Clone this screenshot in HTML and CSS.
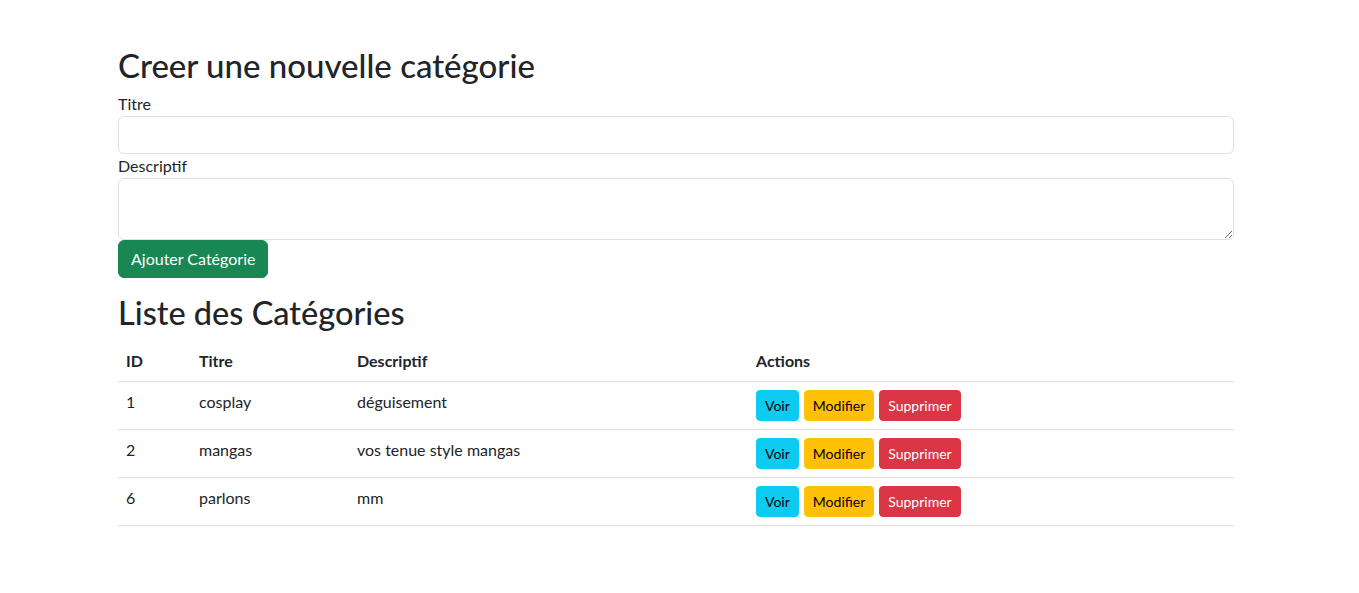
FILE: index.html
```html
<!DOCTYPE html>
<html lang="fr">
<head>
<meta charset="utf-8">
<title>Catégories</title>
<link rel="stylesheet" href="styles.css">
</head>
<body>
<div class="container">
  <h1 class="title">Creer une nouvelle catégorie</h1>
  <form class="form">
    <label class="label" for="titre">Titre</label>
    <input class="control" id="titre" type="text">
    <label class="label" for="desc">Descriptif</label>
    <textarea class="control area" id="desc" rows="2"></textarea>
    <button type="button" class="btn btn-success">Ajouter Catégorie</button>
  </form>
  <h2 class="subtitle">Liste des Catégories</h2>
  <table class="table">
    <thead>
      <tr><th class="c-id">ID</th><th class="c-titre">Titre</th><th class="c-desc">Descriptif</th><th>Actions</th></tr>
    </thead>
    <tbody>
      <tr><td>1</td><td>cosplay</td><td>déguisement</td><td><a class="btn-sm info">Voir</a><a class="btn-sm warning">Modifier</a><a class="btn-sm danger">Supprimer</a></td></tr>
      <tr><td>2</td><td>mangas</td><td>vos tenue style mangas</td><td><a class="btn-sm info">Voir</a><a class="btn-sm warning">Modifier</a><a class="btn-sm danger">Supprimer</a></td></tr>
      <tr><td>6</td><td>parlons</td><td>mm</td><td><a class="btn-sm info">Voir</a><a class="btn-sm warning">Modifier</a><a class="btn-sm danger">Supprimer</a></td></tr>
    </tbody>
  </table>
</div>
</body>
</html>
```
FILE: styles.css
```css
* { box-sizing: border-box; }
html, body { margin: 0; background: #fff; }
body {
  font-family: "Lato", "Segoe UI", sans-serif;
  font-size: 16px;
  line-height: 1.5;
  color: #212529;
}
.container {
  width: 1116px;
  margin-left: 118px;
  padding-top: 46px;
}
.title {
  font-size: 33px;
  font-weight: 500;
  line-height: 38px;
  margin: 0 0 8px;
}
.form { display: flex; flex-direction: column; align-items: flex-start; margin-bottom: 16px; }
.label { display: block; line-height: 24px; height: 24px; }
.control {
  display: block;
  width: 100%;
  height: 38px;
  padding: 6px 12px;
  font: inherit;
  border: 1px solid #dee2e6;
  border-radius: 6px;
  background: #fff;
  color: #212529;
}
.area { height: 62px; resize: vertical; }
.btn {
  display: inline-block;
  font: inherit;
  line-height: 24px;
  height: 38px;
  padding: 6px 12px;
  border: 1px solid transparent;
  border-radius: 6px;
  cursor: pointer;
}
.btn-success { background: #198754; border-color: #198754; color: #fff; }
.subtitle {
  font-size: 32.5px;
  font-weight: 500;
  line-height: 38px;
  margin: 0 0 9px;
}
.table {
  width: 100%;
  border-collapse: collapse;
}
.table th, .table td {
  padding: 8px;
  border-bottom: 1px solid #dee2e6;
  text-align: left;
  vertical-align: top;
  line-height: 24px;
}
.table th { font-weight: 700; }
.c-id { width: 73px; }
.c-titre { width: 158px; }
.c-desc { width: 399px; }
.btn-sm {
  display: inline-block;
  vertical-align: top;
  font-size: 14px;
  line-height: 21px;
  height: 31px;
  padding: 4px 8px;
  margin-right: 5px;
  border: 1px solid transparent;
  border-radius: 4px;
  cursor: pointer;
}
.info { background: #0dcaf0; border-color: #0dcaf0; color: #000; }
.warning { background: #ffc107; border-color: #ffc107; color: #000; }
.danger { background: #dc3545; border-color: #dc3545; color: #fff; }
```
